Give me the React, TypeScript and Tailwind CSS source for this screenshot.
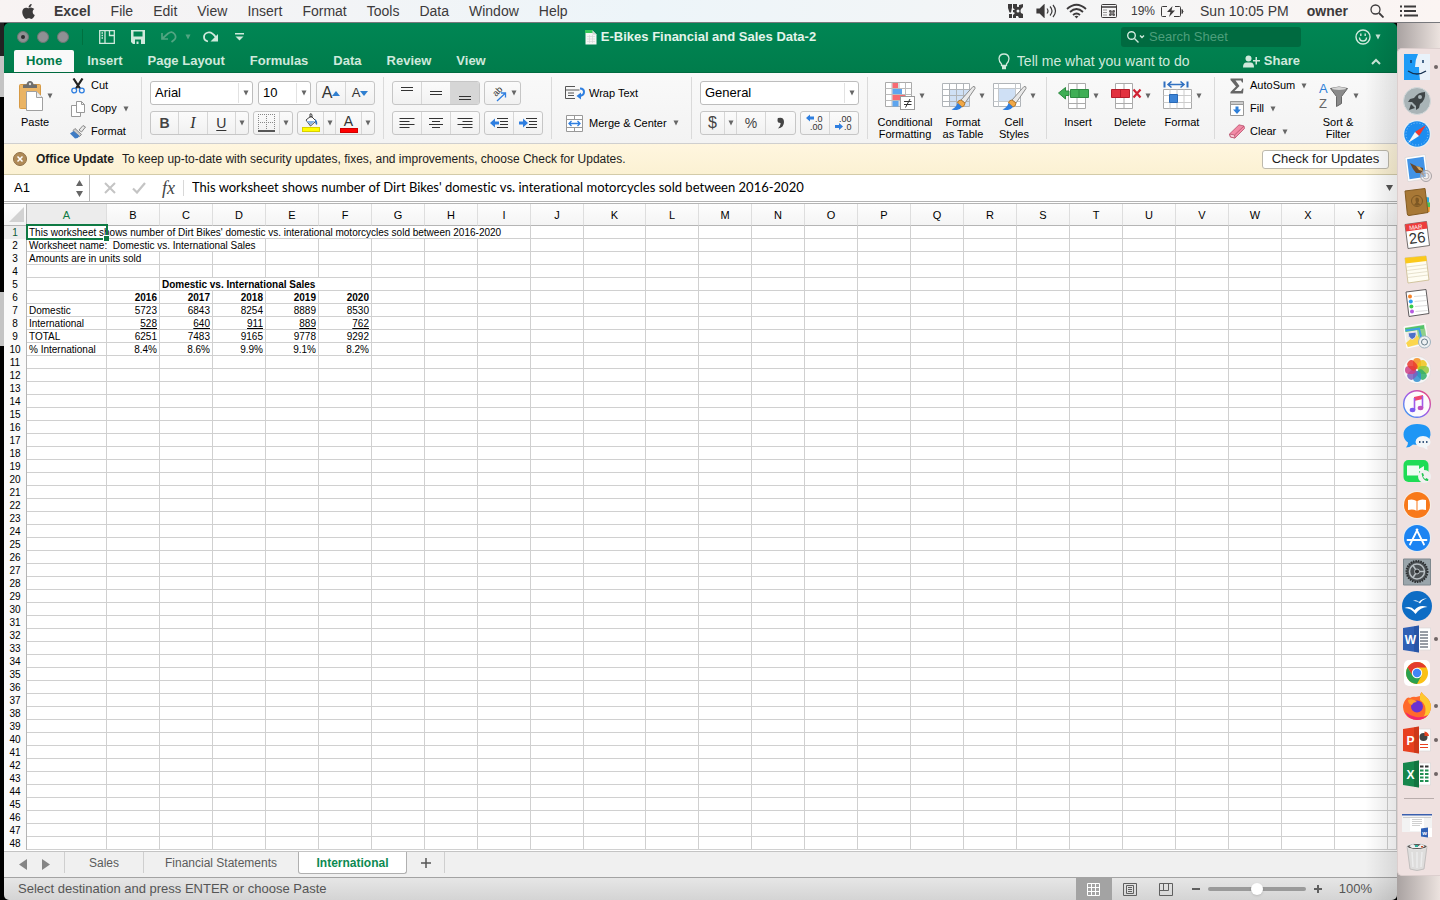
import type { ReactNode } from 'react';
import { FaApple } from 'react-icons/fa';

const MENUS = ['File', 'Edit', 'View', 'Insert', 'Format', 'Tools', 'Data', 'Window', 'Help'];
const TABS = ['Home', 'Insert', 'Page Layout', 'Formulas', 'Data', 'Review', 'View'];
const COLUMNS = 'ABCDEFGHIJKLMNOPQRSTUVWXY'.split('');
const ROW_COUNT = 48;
const TITLE = "This worksheet shows number of Dirt Bikes' domestic vs. interational motorcycles sold between 2016-2020";

type Cell = { text: string; span?: number; bold?: boolean; right?: boolean; underline?: boolean };

const nums = (label: string, values: string[], extra: Partial<Cell> = {}): Record<number, Cell> => {
    const row: Record<number, Cell> = {};
    if (label) row[0] = { text: label };
    values.forEach((v, i) => {
        row[i + 1] = { text: v, right: true, ...extra };
    });
    return row;
};

// row number -> column index -> cell
const DATA: Record<number, Record<number, Cell>> = {
    1: { 0: { text: TITLE, span: 9 } },
    2: { 0: { text: 'Worksheet name:\u00a0 Domestic vs. International Sales', span: 4 } },
    3: { 0: { text: 'Amounts are in units sold', span: 2 } },
    5: { 2: { text: 'Domestic vs. International Sales', span: 4, bold: true } },
    6: nums('', ['2016', '2017', '2018', '2019', '2020'], { bold: true }),
    7: nums('Domestic', ['5723', '6843', '8254', '8889', '8530']),
    8: nums('International', ['528', '640', '911', '889', '762'], { underline: true }),
    9: nums('TOTAL', ['6251', '7483', '9165', '9778', '9292']),
    10: nums('% International', ['8.4%', '8.6%', '9.9%', '9.1%', '8.2%']),
};

function Caret({ className = 'text-[#666]' }: { className?: string }) {
    return (
        <svg width="6" height="6" viewBox="0 0 6 6" className={`shrink-0 ${className}`} aria-hidden="true">
            <path d="M0.5 0.5h5L3 5.5z" fill="currentColor" />
        </svg>
    );
}

/* ---------- macOS menu bar ---------- */

function MenuBar() {
    return (
        <header className="flex h-[23px] items-center border-b border-[#77787c] bg-linear-to-r from-[#f8f3f3] via-[#edf5f9] via-45% to-[#fbf5f3] pl-5 pr-[22px] text-sm text-[#3c3a3b]">
            <FaApple size={17} className="mr-[17px]" />
            <nav className="flex gap-5">
                <a href="#excel" className="font-bold">Excel</a>
                {MENUS.map(m => <a key={m} href={`#menu-${m}`}>{m}</a>)}
            </nav>
            <div className="ml-auto flex items-center">
                <svg width="16" height="16" viewBox="0 0 16 16" className="mr-3" fill="#3c3a3b">
                    <path d="M0 1h4v3.500l-1 5H1.500L0 5zM1 11h3v4H1z" />
                    <path d="M5 1h4v2.500q1 1 2 0V2l4-1v3l-2 2q-1 2 0 4l2 1v4h-4l-1-2H8v2H5v-3l2-2-2-1V7h2L5 5z" />
                    <circle cx="10" cy="8" r="1.500" fill="#f3f5f7" />
                </svg>
                <svg width="22" height="14" viewBox="0 0 22 14" className="mr-2" fill="none" stroke="#3c3a3b" strokeWidth="1.200">
                    <path d="M1 5h3l4-4v12L4 9H1z" fill="#3c3a3b" />
                    <path d="M11 4.500q2 2.500 0 5M14 2.500q4 4.500 0 9M17 1q5 6 0 12" />
                </svg>
                <svg width="21" height="16" viewBox="0 0 21 16" className="mr-[14px]" fill="none" stroke="#3c3a3b" strokeWidth="1.800">
                    <path d="M1 6q9.500-8.500 19 0M4 9q6.500-6 13 0M7 12q3.500-3 7 0" />
                    <path d="M10.500 15.500l-2-2.200q2-1.300 4 0z" fill="#3c3a3b" stroke="none" />
                </svg>
                <svg width="16" height="14" viewBox="0 0 16 14" className="mr-[14px]" fill="none" stroke="#3c3a3b">
                    <rect x="0.5" y="0.5" width="15" height="13" rx="1" />
                    <path d="M1 3h14" strokeWidth="1.500" />
                    <path d="M2.500 6h4M2.500 8.500h4M2.500 11h4" strokeDasharray="1 1" />
                    <path d="M10 6.500v5M12 6.500v5M8.500 8h5M8.500 10h5M8.500 6.500h1.500v1.500H8.500zM12 6.500h1.500v1.500H12zM8.500 10h1.500v1.500H8.500zM12 10h1.500v1.500H12z" strokeWidth="0.7" />
                </svg>
                <span className="mr-1.5 text-xs">19%</span>
                <svg width="23" height="13" viewBox="0 0 23 13" className="mr-4" fill="none" stroke="#3c3a3b">
                    <path d="M6 1.500H1.500Q.5 1.500.5 2.500v8q0 1 1 1H5M14 1.500h4.500q1 0 1 1v8q0 1-1 1H13" />
                    <path d="M11.500 1L6 7h3.500l-1.500 5 6-6.500h-3.500z" fill="#3c3a3b" stroke="none" />
                    <path d="M21 4.500q2 2 0 4z" fill="#3c3a3b" />
                </svg>
                <span className="mr-[18px]">Sun 10:05 PM</span>
                <span className="mr-[22px] font-bold">owner</span>
                <svg width="14" height="14" viewBox="0 0 14 14" className="mr-4" fill="none" stroke="#3c3a3b" strokeWidth="1.300">
                    <circle cx="5.500" cy="5.500" r="4.500" />
                    <path d="M9 9l4.500 4.500" strokeWidth="1.800" />
                </svg>
                <svg width="18" height="12" viewBox="0 0 18 12" stroke="#3c3a3b" strokeWidth="2">
                    <path d="M0 1.500h2M0 6h2M0 10.500h2M4 1.500h12M4 6h12M4 10.500h14" />
                </svg>
            </div>
        </header>
    );
}

/* ---------- Title bar and tabs ---------- */

function TitleBar() {
    return (
        <div className="grid h-7 grid-cols-[1fr_auto_1fr] items-center text-[#cfe9dc]">
            <div className="flex items-center pl-[13px]">
                <div className="flex gap-2 pr-[13px]">
                    {['Close', 'Minimize', 'Zoom'].map((n, i) => (
                        <button key={n} aria-label={n} className="flex size-3 items-center justify-center rounded-full border border-[#6c7772] bg-[#909094]">
                            {i === 0 && <span className="size-1 rounded-full bg-[#2c2c2e]" />}
                        </button>
                    ))}
                </div>
                <span className="h-4 w-px bg-[#00703f]" />
                <button aria-label="Sidebar" className="ml-4">
                    <svg width="16" height="14" viewBox="0 0 16 14" fill="none" stroke="currentColor" strokeWidth="1.300">
                        <path d="M.7.700h14.600v12.600H.700zM6 .7v12.600" />
                        <path d="M10.500 1v4.500H15M2.500 3h1.500M2.500 5.500h1.500M2.500 8h1.500" />
                    </svg>
                </button>
                <button aria-label="Save" className="ml-4">
                    <svg width="14" height="14" viewBox="0 0 14 14" fill="currentColor" fillRule="evenodd">
                        <path d="M0 0h14v14H2l-2-2zM2.500 1.500v5h9v-5zM4 9.500V14h1.500v-2.500h2V14H10V9.500z" />
                    </svg>
                </button>
                <button aria-label="Undo" className="ml-4 text-[#52a582]">
                    <svg width="16" height="12" viewBox="0 0 16 12" fill="none" stroke="currentColor" strokeWidth="1.700">
                        <path d="M1 2v6h6M1.500 7.500L7 2.500q4-3 6.500.5t-.5 6L10.500 11" />
                    </svg>
                </button>
                <Caret className="ml-2 text-[#52a582]" />
                <button aria-label="Redo" className="ml-3">
                    <svg width="16" height="12" viewBox="0 0 16 12" fill="none" stroke="currentColor" strokeWidth="1.800">
                        <path d="M5 10.500Q1 9.500 1 6t4-4.500 8 5" />
                        <path d="M15 3v7.500H7.500z" fill="currentColor" stroke="none" />
                    </svg>
                </button>
                <button aria-label="Customize toolbar" className="ml-4">
                    <svg width="9" height="8" viewBox="0 0 9 8" fill="currentColor">
                        <path d="M0 0h9v1.500H0zM.5 3.500h8l-4 4z" />
                    </svg>
                </button>
            </div>
            <h1 className="flex items-center gap-1 text-[13px] font-bold text-[#e3f4eb]">
                <svg width="12" height="15" viewBox="0 0 12 15">
                    <path d="M.5.500h7l4 4v10H.500z" fill="#f4f6f4" />
                    <path d="M0 0h7.500l1 3H0z" fill="#35c85a" />
                    <path d="M7.500.500v4h4z" fill="#cfd5d1" />
                    <path d="M2 6.500h8M2 9h8M2 11.500h8M4.500 5v8M7.500 5v8" stroke="#d5dad7" strokeWidth="0.700" />
                </svg>
                E-Bikes Financial and Sales Data-2
            </h1>
            <div className="flex items-center justify-end pr-4">
                <label className="mr-[54px] flex h-5 w-[180px] items-center gap-1 rounded-[3px] bg-[#006a40] pl-1.5">
                    <svg width="18" height="12" viewBox="0 0 18 12" fill="none" stroke="currentColor" strokeWidth="1.400" className="shrink-0">
                        <circle cx="4.500" cy="4.500" r="3.800" />
                        <path d="M7.500 7.500l4 4M13 4.500l2 2 2-2" />
                    </svg>
                    <input aria-label="Search Sheet" placeholder="Search Sheet" className="w-full min-w-0 bg-transparent text-[13px] outline-none placeholder:text-[#4d9f7b]" />
                </label>
                <button aria-label="Feedback" className="flex items-center gap-1">
                    <svg width="16" height="16" viewBox="0 0 16 16" fill="none" stroke="currentColor" strokeWidth="1.400">
                        <circle cx="8" cy="8" r="7" />
                        <path d="M4.500 8.500q0 3.500 3.500 3.500t3.500-3.500M5.800 4.500v2.500M10.200 4.500v2.500" />
                    </svg>
                    <Caret className="text-[#cfe9dc]" />
                </button>
            </div>
        </div>
    );
}

function TabRow() {
    return (
        <div className="flex h-[22px] items-end border-b border-[#006b40] pl-2.5 text-[#cfe9dc]">
            <nav className="flex gap-px text-[13px] font-bold leading-[22px]">
                {TABS.map((t, i) => (
                    <button key={t} className={i === 0 ? 'h-[22px] rounded-t-[2px] bg-[#f9f9f9] px-3 text-[#007a4a]' : 'h-[22px] px-3'}>
                        {t}
                    </button>
                ))}
            </nav>
            <div className="ml-auto flex h-[22px] items-center pr-4">
                <svg width="12" height="17" viewBox="0 0 12 17" fill="none" stroke="currentColor" strokeWidth="1.300" className="mr-[7px]">
                    <path d="M3.500 12.500V11Q1 8.500 1 5.500 1.500 1 6 1t5 4.500Q11 8.500 8.500 11v1.500zM4 15.500h4M4 14h4" />
                </svg>
                <input aria-label="Tell me what you want to do" placeholder="Tell me what you want to do" className="mr-[46px] w-[180px] bg-transparent text-sm leading-4 outline-none placeholder:text-[#cfe9dc]" />
                <button className="mr-[71px] flex items-center gap-1 text-[13px] font-bold leading-4">
                    <svg width="17" height="13" viewBox="0 0 17 13" fill="currentColor">
                        <circle cx="5.500" cy="3.500" r="3" />
                        <path d="M0 12.500Q0 7.500 3.500 7.500h4q3.500 0 3.500 5zM12.500 2h1.500v3h3v1.500h-3v3h-1.500v-3H10V5h2.500z" />
                    </svg>
                    Share
                </button>
                <button aria-label="Collapse ribbon">
                    <svg width="10" height="7" viewBox="0 0 10 7" fill="none" stroke="currentColor" strokeWidth="2">
                        <path d="M1 6l4-4 4 4" />
                    </svg>
                </button>
            </div>
        </div>
    );
}

/* ---------- Ribbon ---------- */

function Group({ children, className = 'pl-2' }: { children: ReactNode; className?: string }) {
    return (
        <div className={`flex shrink-0 ${className}`}>
            {children}
            <span className="my-1 ml-auto w-px bg-[#dadada]" />
        </div>
    );
}

// Two rows of 24px controls
function Stack({ children }: { children: ReactNode }) {
    return <div className="mr-2 flex flex-col gap-1.5 pt-2">{children}</div>;
}

function BigButton({ label, icon, className }: { label: ReactNode; icon: ReactNode; className: string }) {
    return (
        <button className={`flex shrink-0 flex-col items-center self-start pt-2 ${className}`}>
            <span className="flex h-[30px] items-center gap-[3px]">
                {icon}
                <Caret />
            </span>
            <span className="mt-[5px] leading-3">{label}</span>
        </button>
    );
}

function RowButton({ label, icon, caret }: { label: string; icon: ReactNode; caret?: boolean }) {
    return (
        <button className="flex h-[23px] shrink-0 items-center">
            <span className="mr-[5px] flex w-4 justify-center">{icon}</span>
            {label}
            {caret && <Caret className="ml-1.5 text-[#666]" />}
        </button>
    );
}

function Box({ children, className }: { children: ReactNode; className: string }) {
    return (
        <div className={`flex h-6 shrink-0 divide-x divide-[#d6d6d6] overflow-hidden rounded-[3px] border border-[#c6c6c6] bg-linear-to-b from-[#fbfbfb] to-[#f1f1f1] ${className}`}>
            {children}
        </div>
    );
}

function Tool({ label, children, className = 'flex-1' }: { label: string; children: ReactNode; className?: string }) {
    return (
        <button aria-label={label} title={label} className={`flex items-center justify-center ${className}`}>
            {children}
        </button>
    );
}

function Dropdown({ label, value, className }: { label: string; value: string; className: string }) {
    return (
        <div className={`relative h-6 shrink-0 rounded-[3px] border border-[#bdbdbd] bg-white ${className}`}>
            <select aria-label={label} defaultValue={value} className="size-full appearance-none bg-transparent pl-1 pr-4 text-[13px] outline-none">
                <option>{value}</option>
            </select>
            <span className="pointer-events-none absolute inset-y-px right-0 flex w-[14px] items-center justify-center border-l border-[#e2e2e2]">
                <Caret />
            </span>
        </div>
    );
}

function Lines({ d }: { d: string }) {
    return (
        <svg width="16" height="16" viewBox="0 0 16 16" stroke="#333" aria-hidden="true">
            <path d={d} />
        </svg>
    );
}

const ARROW_L = 'M0 5l5-4.500v3h4v3H5v3z';
const ARROW_R = 'M9 5L4 .500v3H0v3h4v3z';

function Indent({ out }: { out?: boolean }) {
    return (
        <svg width="18" height="12" viewBox="0 0 18 12" aria-hidden="true">
            <path d="M7 1.500h11M10 4.500h8M10 7.500h8M7 10.500h11" stroke="#333" />
            <path d={out ? ARROW_L : ARROW_R} transform="translate(0 1)" fill="#2f7fe0" />
        </svg>
    );
}

function Brush() {
    return (
        <g>
            <path d="M19 18L31 4.500Q33.500 4 33 6.500L23 21z" fill="#e9e9e9" stroke="#8c8c8c" />
            <path d="M19 18q-3 0-3.500 3l4.500 4q3-1 3-4z" fill="#f0a848" stroke="#b77a2a" />
            <path d="M15.500 21q-1 4-6 6.500 7 2 10.500-2.500z" fill="#2f7fe0" />
        </g>
    );
}

function Ribbon() {
    return (
        <div className="flex h-[71px] overflow-hidden border-b border-[#cfcfcf] bg-linear-to-b from-[#f9f9f9] to-[#f3f3f3] text-[11px] text-black">
            <Group className="w-[138px]">
                <BigButton
                    label="Paste"
                    className="w-[62px]"
                    icon={
                        <svg width="26" height="30" viewBox="0 0 26 30">
                            <rect x="1.500" y="3.500" width="21" height="24" rx="1" fill="#eab465" stroke="#d79a45" />
                            <path d="M5 7V4.500q0-1 1-1h2.500Q9 0 12 0t3.500 3.500H18q1 0 1 1V7z" fill="#6d6d6d" />
                            <circle cx="12" cy="3" r="1.200" fill="#ddd" />
                            <path d="M8.500 10.500h10l6 6V29.500h-16z" fill="#fff" stroke="#a0a0a0" />
                            <path d="M18.500 10.500v6h6" fill="#eee" stroke="#a0a0a0" />
                        </svg>
                    }
                />
                <div className="flex flex-col pl-1 pt-px">
                    <RowButton
                        label="Cut"
                        icon={
                            <svg width="14" height="16" viewBox="0 0 14 16" fill="none">
                                <path d="M2.500.500l6.500 10M11.500.500L5 10.500" stroke="#222" strokeWidth="2.200" />
                                <circle cx="3.200" cy="12.500" r="2.400" stroke="#2f7fe0" strokeWidth="1.300" />
                                <circle cx="10.800" cy="12.500" r="2.400" stroke="#2f7fe0" strokeWidth="1.300" />
                            </svg>
                        }
                    />
                    <RowButton
                        label="Copy"
                        caret
                        icon={
                            <svg width="14" height="16" viewBox="0 0 14 16" fill="#fff" stroke="#999">
                                <path d="M.5 4.500h6l3 3v8h-9z" />
                                <path d="M5.500.500h5l3 3v8h-8zM10.500.500v3h3" />
                            </svg>
                        }
                    />
                    <RowButton
                        label="Format"
                        icon={
                            <svg width="16" height="14" viewBox="0 0 16 14">
                                <path d="M9 5l4-4.500 2.500 1.500-4 5z" fill="#e8e8e8" stroke="#888" />
                                <path d="M5 3.500l6.500 6-2 2L3 5.500z" fill="#ccc" stroke="#888" />
                                <path d="M3.500 6L0 8.500l5 5Q8 13.500 9.500 11z" fill="#3f7cc4" />
                            </svg>
                        }
                    />
                </div>
            </Group>

            <Group>
                <Stack>
                    <div className="flex gap-[5px]">
                        <Dropdown label="Font" value="Arial" className="w-[103px]" />
                        <Dropdown label="Font size" value="10" className="w-[53px]" />
                        <Box className="w-[59px]">
                            <Tool label="Increase font size">
                                <span className="text-base text-[#333]">A</span>
                                <svg width="8" height="5" viewBox="0 0 8 5"><path d="M0 5h8L4 0z" fill="#2f7fd0" /></svg>
                            </Tool>
                            <Tool label="Decrease font size">
                                <span className="text-[13px] text-[#333]">A</span>
                                <svg width="8" height="5" viewBox="0 0 8 5"><path d="M0 0h8L4 5z" fill="#2f7fd0" /></svg>
                            </Tool>
                        </Box>
                    </div>
                    <div className="flex gap-1">
                        <Box className="w-[99px]">
                            <Tool label="Bold"><span className="text-sm font-bold text-[#444]">B</span></Tool>
                            <Tool label="Italic"><span className="font-['Liberation_Serif'] text-base italic text-[#333]">I</span></Tool>
                            <Tool label="Underline"><span className="text-sm text-[#333] underline underline-offset-2">U</span></Tool>
                            <Tool label="Underline options" className="w-3"><Caret /></Tool>
                        </Box>
                        <Box className="w-10">
                            <Tool label="Borders">
                                <svg width="17" height="18" viewBox="0 0 17 18" fill="none" stroke="#888">
                                    <path d="M0 .500h17M0 8.500h17" strokeDasharray="1 1" />
                                    <path d="M.5 0v16M8.500 0v16M16.500 0v16" strokeDasharray="1 1" />
                                    <path d="M0 17h17" stroke="#222" strokeWidth="1.500" />
                                </svg>
                            </Tool>
                            <Tool label="Border options" className="w-3"><Caret /></Tool>
                        </Box>
                        <Box className="w-[78px]">
                            <Tool label="Fill color">
                                <svg width="18" height="20" viewBox="0 0 18 20">
                                    <path d="M4 7l5-4 5 5-5.500 5z" fill="#fff" stroke="#444" />
                                    <path d="M4.500 8h8.500l-4.500 4z" fill="#88b4e4" />
                                    <path d="M8 5V1q1.500-1 2 1v3" fill="none" stroke="#444" />
                                    <path d="M13 6q3 2 2 6-2-1-2-4z" fill="#2f6fc0" />
                                    <rect x="0.500" y="14.500" width="17" height="4" fill="#fffc00" stroke="#d8d000" />
                                </svg>
                            </Tool>
                            <Tool label="Fill color options" className="w-3"><Caret /></Tool>
                            <Tool label="Font color">
                                <span className="flex flex-col items-center">
                                    <span className="text-sm leading-[14px] text-[#333]">A</span>
                                    <span className="h-[5px] w-[18px] border border-[#d00000] bg-[#ff0000]" />
                                </span>
                            </Tool>
                            <Tool label="Font color options" className="w-3"><Caret /></Tool>
                        </Box>
                    </div>
                </Stack>
            </Group>

            <Group>
                <Stack>
                    <div className="flex gap-1">
                        <Box className="w-[88px]">
                            <Tool label="Align top"><Lines d="M2 2.500h12M2 5.500h12" /></Tool>
                            <Tool label="Align middle"><Lines d="M2 6.500h12M2 9.500h12" /></Tool>
                            <Tool label="Align bottom" className="flex-1 bg-[#d6d6d6]"><Lines d="M2 11.500h12M2 14.500h12" /></Tool>
                        </Box>
                        <Box className="w-[37px]">
                            <Tool label="Orientation" className="flex-1 gap-1">
                                <svg width="18" height="18" viewBox="0 0 18 18">
                                    <text fontSize="9" fill="#333" transform="translate(7 13) rotate(-45)">ab</text>
                                    <path d="M8 17l8-7.500M12 9h4.500v4.500" fill="none" stroke="#2f7fe0" strokeWidth="1.300" />
                                </svg>
                                <Caret />
                            </Tool>
                        </Box>
                    </div>
                    <div className="flex gap-1">
                        <Box className="w-[88px]">
                            <Tool label="Align left"><Lines d="M.5 3.500h15M.5 6.500h10M.5 9.500h15M.5 12.500h10" /></Tool>
                            <Tool label="Align center"><Lines d="M1 3.500h14M4 6.500h8M1 9.500h14M4 12.500h8" /></Tool>
                            <Tool label="Align right"><Lines d="M.5 3.500h15M5.500 6.500h10M.5 9.500h15M5.500 12.500h10" /></Tool>
                        </Box>
                        <Box className="w-[59px]">
                            <Tool label="Decrease indent"><Indent out /></Tool>
                            <Tool label="Increase indent"><Indent /></Tool>
                        </Box>
                    </div>
                </Stack>
            </Group>

            <Group className="w-[140px] pl-[13px]">
                <Stack>
                    <button className="flex h-6 items-center gap-1">
                        <svg width="20" height="14" viewBox="0 0 20 14" fill="none" stroke="#555">
                            <path d="M10 .500H.500v12H10M.5 4h14M3 7h6M3 9.500h6" />
                            <path d="M15 2.500q4 0 4 3.500t-5 4" stroke="#2f7fe0" strokeWidth="2" />
                            <path d="M11.500 10l4.500-3.500v7z" fill="#2f7fe0" stroke="none" />
                        </svg>
                        Wrap Text
                    </button>
                    <button className="flex h-6 items-center whitespace-nowrap">
                        <svg width="17" height="17" viewBox="0 0 17 17" fill="#fff" stroke="#999" className="ml-px mr-1.5">
                            <path d="M.5.500h16v16H.500zM.5 4.500h16M.5 12.500h16M8.500.500v4M8.500 12.500v4" />
                            <path d="M3 8.500h11M5.500 6L3 8.500 5.500 11M11.500 6L14 8.500 11.500 11" stroke="#2f7fe0" strokeWidth="1.300" fill="none" />
                        </svg>
                        Merge &amp; Center
                        <Caret className="ml-1.5 text-[#666]" />
                    </button>
                </Stack>
            </Group>

            <Group>
                <Stack>
                    <Dropdown label="Number format" value="General" className="w-[159px]" />
                    <div className="flex gap-1">
                        <Box className="w-24">
                            <Tool label="Currency"><span className="text-base text-[#444]">$</span></Tool>
                            <Tool label="Currency options" className="w-3"><Caret /></Tool>
                            <Tool label="Percent" className="w-[29px]"><span className="text-sm text-[#444]">%</span></Tool>
                            <Tool label="Comma" className="w-[29px]">
                                <svg width="8" height="12" viewBox="0 0 8 12"><path d="M1 1q6-1.500 6 4t-6 6.500q3-3 2.500-5.500Q.5 6 .500 3.500T1 1z" fill="#444" /></svg>
                            </Tool>
                        </Box>
                        <Box className="w-[59px]">
                            <Tool label="Increase decimal">
                                <svg width="18" height="18" viewBox="0 0 18 18">
                                    <path d="M0 4l4-3.500v2h4v3H4v2z" fill="#2f7fe0" />
                                    <text x="9" y="8" fontSize="9" fill="#333">.0</text>
                                    <text x="4" y="16" fontSize="9" fill="#333">.00</text>
                                </svg>
                            </Tool>
                            <Tool label="Decrease decimal">
                                <svg width="18" height="18" viewBox="0 0 18 18">
                                    <path d="M8 12.500l-4-3.500v2H0v3h4v2z" fill="#2f7fe0" />
                                    <text x="4" y="8" fontSize="9" fill="#333">.00</text>
                                    <text x="9" y="16" fontSize="9" fill="#333">.0</text>
                                </svg>
                            </Tool>
                        </Box>
                    </div>
                </Stack>
            </Group>

            <Group className="w-[179px] pl-1.5">
                <BigButton
                    label={<>Conditional<br />Formatting</>}
                    className="w-[62px]"
                    icon={
                        <svg width="31" height="28" viewBox="0 0 31 28">
                            <path d="M.5.500h26v24H.500z" fill="#fff" stroke="#aaa" />
                            <path d="M.5 6.500h26M.5 12.500h26M.5 18.500h26M7 .5v24M14 .5v24M20.500.500v24" stroke="#bbb" />
                            <path d="M7.500 1h5.500v5H7.500zM7.500 13H20v5H7.500z" fill="#f76a72" />
                            <path d="M7.500 7H17v5H7.500zM7.500 19h6v5.500h-6z" fill="#5ea5ee" />
                            <rect x="15.500" y="14.500" width="14" height="13" fill="#fff" stroke="#999" />
                            <path d="M19 19.500h7.500M19 22.500h7.500M25 17l-4.500 8.500" stroke="#333" />
                        </svg>
                    }
                />
                <BigButton
                    label={<>Format<br />as Table</>}
                    className="w-[54px]"
                    icon={
                        <svg width="34" height="28" viewBox="0 0 34 28">
                            <path d="M.5 1.500h27v23H.500z" fill="#fff" />
                            <path d="M8 8h19.500v16.500H8z" fill="#cfe0f5" />
                            <path d="M.5 1.500h27v23H.500zM.5 7.500h27M.5 13.500h27M.5 19.500h27M7.500 1.500v23M14.500 1.500v23M21.500 1.500v23" stroke="#b0b4b8" fill="none" />
                            <Brush />
                        </svg>
                    }
                />
                <BigButton
                    label={<>Cell<br />Styles</>}
                    className="w-12"
                    icon={
                        <svg width="34" height="28" viewBox="0 0 34 28">
                            <path d="M.5 1.500h27v23H.500z" fill="#fff" stroke="#b0b4b8" />
                            <path d="M.5 6.500h27M.5 19.500h27M5.500 1.500v23M22.500 1.500v23" stroke="#c4c8cc" />
                            <path d="M6 7h16v12H6z" fill="#cfe0f5" />
                            <Brush />
                        </svg>
                    }
                />
            </Group>

            <Group className="w-[168px] pl-[5px]">
                <BigButton
                    label="Insert"
                    className="w-[52px]"
                    icon={
                        <svg width="32" height="28" viewBox="0 0 32 28">
                            <path d="M10.500 1.500h17v25h-17zM19 1.500v25M10.500 21.500h17" fill="#fff" stroke="#aaa" />
                            <path d="M12.500 7.500h18v8h-18z" fill="#3fae55" stroke="#2c8a40" />
                            <path d="M.5 11l7-5.500V9H11v4.500H7.500V17z" fill="#3fae55" stroke="#2c8a40" />
                            <path d="M21 7.500v8" stroke="#2c8a40" />
                        </svg>
                    }
                />
                <BigButton
                    label="Delete"
                    className="w-[52px]"
                    icon={
                        <svg width="32" height="28" viewBox="0 0 32 28">
                            <path d="M5.500 1.500h17v25h-17zM14 1.500v25M5.500 21.500h17" fill="#fff" stroke="#aaa" />
                            <path d="M1.500 7.500h18v8h-18z" fill="#e2313f" stroke="#b51d2b" />
                            <path d="M10.500 7.500v8" stroke="#b51d2b" />
                            <path d="M23.500 7.500l7 8M30.500 7.500l-7 8" stroke="#cf2233" strokeWidth="2.200" />
                        </svg>
                    }
                />
                <BigButton
                    label="Format"
                    className="w-[52px]"
                    icon={
                        <svg width="30" height="30" viewBox="0 0 30 30">
                            <path d="M1.500.500v6M24.500.500v6" stroke="#2f6fc0" strokeWidth="2" />
                            <path d="M5 3.500h16M8.500.500L5 3.500l3.500 3M17.500.500L21 3.500l-3.500 3" stroke="#2f6fc0" strokeWidth="1.500" fill="none" />
                            <path d="M.5 8.500h28v19H.500z" fill="#fff" stroke="#aaa" />
                            <path d="M.5 14.500h28M.5 21.500h28M7 8.500v19M14 8.500v19M21 8.500v19" stroke="#ccc" />
                            <path d="M6.500 13.500h8v8h-8z" fill="#3d84d6" stroke="#2a69b5" />
                        </svg>
                    }
                />
            </Group>

            <div className="flex shrink-0 pl-[14px]">
                <div className="flex w-[82px] flex-col pt-px">
                    <RowButton
                        label="AutoSum"
                        caret
                        icon={<svg width="14" height="16" viewBox="0 0 14 16"><path d="M.5.500h12.500v4h-1L11 2.500H5.500L9.500 8l-5 5H11l1.500-2.500h1l-.5 5H.500v-1.500L6 8.500.500 2z" fill="#666" /></svg>}
                    />
                    <RowButton
                        label="Fill"
                        caret
                        icon={
                            <svg width="14" height="15" viewBox="0 0 14 15">
                                <path d="M.5.500h13v14H.500z" fill="#fff" stroke="#999" />
                                <path d="M.5.500h13v3H.500z" fill="#ccc" stroke="#999" />
                                <path d="M5.500 5.500h3v3H11l-4 4.500-4-4.500h2.500z" fill="#2f7fd8" />
                            </svg>
                        }
                    />
                    <RowButton
                        label="Clear"
                        caret
                        icon={
                            <svg width="16" height="15" viewBox="0 0 16 15" stroke="#b8506c" strokeWidth="0.800" strokeLinejoin="round">
                                <path d="M.5 10L10 .800l5 1.200.500 2.500L6 14l-4.500-1z" fill="#f28ba6" />
                                <path d="M.5 10l5 1L6 14l-4.500-1z" fill="#fbd0db" />
                                <path d="M5.500 11L15 2" />
                            </svg>
                        }
                    />
                </div>
                <BigButton
                    label={<>Sort &amp;<br />Filter</>}
                    className="w-[54px]"
                    icon={
                        <svg width="32" height="28" viewBox="0 0 32 28">
                            <text x="1" y="11" fontSize="13" fill="#2f7fd8">A</text>
                            <text x="1" y="26" fontSize="13" fill="#666">Z</text>
                            <path d="M12.500 6.500q8.500-3 17 0l-6 8v7l-5 3v-10z" fill="#8a8a8a" stroke="#666" />
                            <ellipse cx="21" cy="6.500" rx="7" ry="1.500" fill="#d5d5d5" />
                        </svg>
                    }
                />
            </div>
        </div>
    );
}

/* ---------- Message and formula bars ---------- */

function UpdateBar() {
    return (
        <div className="flex h-[31px] items-center border-b border-[#d3cba9] bg-linear-to-b from-[#fff6df] to-[#fbf1d3] pl-[9px] pr-2 text-[#1c1c1c]">
            <button aria-label="Dismiss" className="mr-[9px]">
                <svg width="14" height="14" viewBox="0 0 14 14">
                    <circle cx="7" cy="7" r="6.500" fill="#b08b57" stroke="#8f7048" />
                    <path d="M4.500 4.500l5 5M9.500 4.500l-5 5" stroke="#fff" strokeWidth="1.500" />
                </svg>
            </button>
            <p className="text-xs">
                <b className="mr-2">Office Update</b>
                To keep up-to-date with security updates, fixes, and improvements, choose Check for Updates.
            </p>
            <button className="ml-auto h-[19px] w-[127px] rounded-[3px] border border-[#bdb9ac] bg-white text-[13px] leading-4">Check for Updates</button>
        </div>
    );
}

function FormulaBar() {
    return (
        <div className="flex h-[29px] items-center border-b-[3px] border-double border-[#b4b4b4] bg-white">
            <div className="flex h-full w-[86px] items-center border-r border-[#b8b8b8] pl-2.5 pr-1.5">
                <input aria-label="Name Box" defaultValue="A1" className="w-full min-w-0 text-[13px] outline-none" />
                <svg width="7" height="17" viewBox="0 0 7 17" fill="#666" className="shrink-0">
                    <path d="M0 6h7L3.500 0zM0 11h7L3.500 17z" />
                </svg>
            </div>
            <button aria-label="Cancel" className="ml-[14px]">
                <svg width="12" height="12" viewBox="0 0 12 12" stroke="#c4c4c4" strokeWidth="2"><path d="M1 1l10 10M11 1L1 11" /></svg>
            </button>
            <button aria-label="Enter" className="ml-4">
                <svg width="14" height="12" viewBox="0 0 14 12" fill="none" stroke="#c4c4c4" strokeWidth="2.200"><path d="M1 6.500l4 4L13 1" /></svg>
            </button>
            <button aria-label="Insert function" className="ml-4 border-r border-[#d8d8d8] pr-2 font-['Liberation_Serif'] text-lg italic leading-4 text-[#444]">fx</button>
            <input aria-label="Formula" defaultValue={TITLE} className="ml-2 min-w-0 flex-1 font-['Lato',sans-serif] text-[13px] outline-none [font-variant-ligatures:none]" />
            <button aria-label="Expand formula bar" className="mr-1">
                <svg width="7" height="6" viewBox="0 0 7 6" fill="#555"><path d="M0 0h7L3.500 6z" /></svg>
            </button>
        </div>
    );
}

/* ---------- Sheet ---------- */

function SheetRow({ n }: { n: number }) {
    const row = DATA[n] ?? {};
    const cells: ReactNode[] = [];
    for (let c = 0; c <= COLUMNS.length; c++) {
        const cell = row[c];
        cells.push(
            <td
                key={c}
                colSpan={cell?.span}
                className={`relative h-[13px] whitespace-nowrap border-b border-r border-[#d0d0d0] px-0.5 pb-0 pt-0.5 ${cell?.bold ? 'font-bold' : ''} ${cell?.right ? 'text-right' : ''} ${cell?.underline ? 'underline' : ''}`}
            >
                {cell?.text}
                {n === 1 && c === 0 && (
                    <span className="pointer-events-none absolute -left-px -top-0.5 h-4 w-[82px] border-2 border-[#0f7a44]">
                        <span className="absolute -bottom-[3px] -right-[3px] size-[6px] border-l border-t border-white bg-[#0f7a44]" />
                    </span>
                )}
            </td>,
        );
        if (cell?.span) c += cell.span - 1;
    }
    return (
        <tr>
            <th scope="row" className={`border-r border-[#b5b5b5] p-0 pb-px pt-0.5 font-normal ${n === 1 ? 'bg-[#ececec] text-[#0f5a38]' : 'bg-[#fafafa]'}`}>{n}</th>
            {cells}
        </tr>
    );
}

function Sheet() {
    return (
        <div className="flex-1 overflow-hidden bg-white pb-px">
            <table className="w-full table-fixed border-separate border-spacing-0 text-[10px] leading-[10px] text-black">
                <colgroup>
                    <col className="w-[23px]" />
                    {COLUMNS.map(c => (
                        <col key={c} className={c === 'A' ? 'w-[80px]' : c === 'K' ? 'w-[62px]' : 'w-[53px]'} />
                    ))}
                    <col />
                </colgroup>
                <thead>
                    <tr className="bg-linear-to-b from-[#fdfdfd] to-[#f4f4f4]">
                        <td className="border-b border-r border-[#b5b5b5] p-0">
                            <svg width="15" height="15" viewBox="0 0 15 15" className="ml-[5px]" aria-hidden="true"><path d="M15 0v15H0z" fill="#d2d2d2" /></svg>
                        </td>
                        {COLUMNS.map(c => (
                            <th key={c} scope="col" className={`h-[22px] border-b border-r border-b-[#b5b5b5] border-r-[#dedede] p-0 text-[11px] font-normal ${c === 'A' ? 'bg-[#ececec] text-[#0f7a44]' : ''}`}>{c}</th>
                        ))}
                        <td className="border-b border-[#b5b5b5] p-0" />
                    </tr>
                </thead>
                <tbody>
                    {Array.from({ length: ROW_COUNT }, (_, i) => <SheetRow key={i} n={i + 1} />)}
                </tbody>
            </table>
        </div>
    );
}

function SheetTabs() {
    return (
        <div className="flex h-[26px] border-t border-[#c4c4c4] bg-[#f0f0f0] text-xs leading-5 text-[#5b5b5b]">
            <div className="flex w-[60px] items-center gap-[15px] pl-[15px]">
                <button aria-label="Previous sheet"><svg width="8" height="11" viewBox="0 0 8 11"><path d="M8 0v11L0 5.500z" fill="#858585" /></svg></button>
                <button aria-label="Next sheet"><svg width="8" height="11" viewBox="0 0 8 11"><path d="M0 0v11l8-5.500z" fill="#858585" /></svg></button>
            </div>
            <button className="h-[21px] w-20 border-x border-[#cfcfcf]">Sales</button>
            <button className="h-[21px] w-[154px]">Financial Statements</button>
            <button className="h-[22px] w-[109px] rounded-b-[3px] border-x border-b border-[#b0b0b0] bg-white font-bold text-[#0c8a52]">International</button>
            <button aria-label="Add sheet" className="flex h-[21px] w-[38px] items-center justify-center border-r border-[#cfcfcf]">
                <svg width="10" height="10" viewBox="0 0 10 10" stroke="#555" strokeWidth="1.500"><path d="M5 0v10M0 5h10" /></svg>
            </button>
        </div>
    );
}

function StatusBar() {
    return (
        <footer className="flex h-[23px] items-center border-t border-[#a3a3a3] bg-linear-to-b from-[#e6e6e6] to-[#d4d4d4] pl-[14px] pr-[25px] text-[13px] leading-4 text-[#555]">
            <span>Select destination and press ENTER or choose Paste</span>
            <div className="ml-auto flex h-full items-center">
                <button aria-label="Normal view" className="flex h-full w-9 items-center justify-center bg-[#a3a3a3]">
                    <svg width="13" height="13" viewBox="0 0 13 13" fill="none" stroke="#fff"><path d="M.5.500h12v12H.500zM4.500.500v12M8.500.500v12M.5 4.500h12M.5 8.500h12" /></svg>
                </button>
                <button aria-label="Page layout view" className="flex h-full w-9 items-center justify-center">
                    <svg width="14" height="13" viewBox="0 0 14 13" fill="none" stroke="#5f5f5f"><path d="M.5.500h13v12H.500zM3.500 2.500h7v8h-7zM5 4.500h4M5 6.500h4M5 8.500h4" /></svg>
                </button>
                <button aria-label="Page break view" className="flex h-full w-9 items-center justify-center">
                    <svg width="14" height="13" viewBox="0 0 14 13" fill="none" stroke="#5f5f5f"><path d="M.5.500h13v12H.500zM4.500.500v7M9.500.500v7M.5 7.500h9" /></svg>
                </button>
                <button aria-label="Zoom out" className="ml-2 h-0.5 w-2 bg-[#5f5f5f]" />
                <input
                    type="range"
                    aria-label="Zoom"
                    defaultValue={50}
                    className="mx-2 h-1 w-[98px] appearance-none rounded-full bg-[#9a9a9a] [&::-webkit-slider-thumb]:size-3 [&::-webkit-slider-thumb]:appearance-none [&::-webkit-slider-thumb]:rounded-full [&::-webkit-slider-thumb]:bg-white [&::-webkit-slider-thumb]:shadow"
                />
                <button aria-label="Zoom in">
                    <svg width="8" height="8" viewBox="0 0 8 8" stroke="#5f5f5f" strokeWidth="2"><path d="M4 0v8M0 4h8" /></svg>
                </button>
                <span className="ml-[17px]">100%</span>
            </div>
        </footer>
    );
}

/* ---------- Dock ---------- */

function OfficeIcon({ letter, color, dark, children }: { letter: string; color: string; dark: string; children: ReactNode }) {
    return (
        <>
            <path d="M14 3h13.500v22H14z" fill="#fff" stroke="#d5d5d5" strokeWidth="0.600" />
            {children}
            <path d="M0 3L16 .500v27L0 25z" fill={color} />
            <path d="M16 .500v27l-5-.8V1.300z" fill={dark} opacity="0.400" />
            <text x="7.500" y="18.500" fontSize="12" fontWeight="bold" textAnchor="middle" fill="#fff">{letter}</text>
        </>
    );
}

const PETALS = ['#f78f1e', '#f0c419', '#93c83d', '#2fae6a', '#2f8fd0', '#7a5fc0', '#cc3f86', '#ea3a2e'];

const DOCK: { name: string; running?: boolean; art: ReactNode }[] = [
    {
        name: 'Finder',
        running: true,
        art: (
            <>
                <path d="M1 1h26v26H1z" fill="#e9f2fa" />
                <path d="M1 1h14q-3 6-3 13h4q0 8 1 13H1z" fill="#1e9bf6" />
                <path d="M8 7v3M20 7v3" stroke="#123a66" strokeWidth="1.500" />
                <path d="M5 18q9 6 18 0" fill="none" stroke="#14304f" strokeWidth="1.300" />
            </>
        ),
    },
    {
        name: 'Launchpad',
        art: (
            <>
                <circle cx="14" cy="14" r="13.500" fill="#a9b4b7" stroke="#d4dadb" />
                <path d="M22 5q-7 0-11 6l-4 1-2 3 4 0 4 4 0 4 3-2 1-4q6-4 5-12z" fill="#3f4547" />
                <circle cx="17" cy="10" r="2" fill="#a9b4b7" />
                <path d="M8 17l-2 6 6-2z" fill="#3f4547" />
            </>
        ),
    },
    {
        name: 'Safari',
        art: (
            <>
                <circle cx="14" cy="14" r="14" fill="#e8edf1" />
                <circle cx="14" cy="14" r="12.800" fill="#1c8df0" />
                <circle cx="14" cy="14" r="11" fill="none" stroke="#8cc8fa" strokeDasharray="1 2" />
                <path d="M23 5L12 12l4 4z" fill="#f2392f" />
                <path d="M5 23l7-11 4 4z" fill="#f4f4f4" />
            </>
        ),
    },
    {
        name: 'Mail',
        art: (
            <>
                <path d="M2 3.500L22 .500l3 24-20 3z" fill="#fff" stroke="#ccc" strokeWidth="0.500" />
                <path d="M4 5.200l16.500-2.500 2.500 20-16.500 2.500z" fill="#4293e6" />
                <path d="M7 9l6 3 7 2 0 4 2 5-5-4-4 0-3-4-2-4z" fill="#6b4a2a" />
                <path d="M13 12l4 1 3 4-4-1z" fill="#d9a860" />
                <circle cx="23" cy="22" r="5.500" fill="#e9e5e6" fillOpacity="0.500" stroke="#a9a3a5" />
                <circle cx="23" cy="22" r="3" fill="none" stroke="#a9a3a5" strokeWidth="0.700" />
            </>
        ),
    },
    {
        name: 'Contacts',
        art: (
            <>
                <path d="M22 4l4 1v5h-3z" fill="#e8e8e8" />
                <path d="M23 9l3 .5v5h-3z" fill="#27a8e0" />
                <path d="M23 14l4 .5v5h-3z" fill="#4cc35a" />
                <path d="M23 19l4 0-.5 5h-3z" fill="#f09a2a" />
                <path d="M2 3L22 .500l3 24L6 27.500q-1.500 0-1.700-1.500z" fill="#a87836" stroke="#845b22" />
                <circle cx="14" cy="13" r="5.500" fill="none" stroke="#7d5824" />
                <path d="M14 9.500q2 0 2 2.500t-1 2.500l2.500 2q-3 2-6.500.500l2-2.500q-1.500-5 1-5z" fill="#7d5824" />
            </>
        ),
    },
    {
        name: 'Calendar',
        art: (
            <>
                <path d="M2 3.500L23.500.500l3 24L5 27.500z" fill="#fff" stroke="#55504f" strokeWidth="0.800" />
                <path d="M2 3.500L23.500.500l1 7L3 10.500z" fill="#ed3b3b" />
                <text x="13" y="8.200" fontSize="6" textAnchor="middle" fill="#fff" transform="rotate(-7 13 8)">MAR</text>
                <text x="14.500" y="22" fontSize="15" textAnchor="middle" fill="#333" transform="rotate(-7 14 20)">26</text>
            </>
        ),
    },
    {
        name: 'Notes',
        art: (
            <>
                <path d="M2 3L23 1l3 24-21 3z" fill="#fffdf2" stroke="#c8b98c" strokeWidth="0.800" />
                <path d="M2 3L23 1l.8 5L2.500 8.500z" fill="#fbc91c" />
                <path d="M3.500 12l20-2.500M4 15.500L24 13M4.500 19l20-2.500M5 22.500L25 20" stroke="#ddd6bd" strokeWidth="0.700" />
            </>
        ),
    },
    {
        name: 'Reminders',
        art: (
            <>
                <path d="M3 3L23 .500l3 24-20 3z" fill="#fff" stroke="#605c5e" />
                <path d="M11 7.500l12-1M11.500 12.500l12-1M12 17.500l12-1M12.500 22.500l12-1" stroke="#ccc" strokeWidth="0.700" />
                <circle cx="7" cy="7.500" r="2" fill="#f5822a" />
                <circle cx="7.800" cy="12.500" r="2" fill="#2a9bf0" />
                <circle cx="8.400" cy="17.500" r="2" fill="#3acb4a" />
                <circle cx="9" cy="22.500" r="2" fill="#b65ae0" />
            </>
        ),
    },
    {
        name: 'Maps',
        art: (
            <>
                <path d="M1 5l21-3.500 3 20L4 26z" fill="#f1eee4" stroke="#fff" />
                <path d="M2 6l19-3 .5 4L2.500 10z" fill="#55c46a" />
                <path d="M14 8l8-1.500 2 14-8 1z" fill="#8fd08a" />
                <path d="M3 21l10-9 7 9-15 4z" fill="#fbd64e" />
                <path d="M2.500 8.500L16 6.500l3 12" fill="none" stroke="#3f9fe8" strokeWidth="2" />
                <path d="M5 11l8-1q1 6-4 7.500Q5 16 5 11z" fill="#4b6fc8" stroke="#e8e4f0" />
                <circle cx="21.500" cy="20" r="6" fill="#eef1f3" stroke="#9fb2be" />
                <circle cx="21.500" cy="20" r="3" fill="none" stroke="#667b88" />
            </>
        ),
    },
    {
        name: 'Photos',
        art: (
            <>
                <circle cx="14" cy="14" r="13.800" fill="#f7f6f6" stroke="#d8d2d2" strokeWidth="0.500" />
                {PETALS.map((p, i) => (
                    <rect key={p} x="10" y="2" width="8" height="11" rx="4" fill={p} fillOpacity="0.850" transform={`rotate(${i * 45} 14 14)`} />
                ))}
            </>
        ),
    },
    {
        name: 'iTunes',
        art: (
            <>
                <defs>
                    <linearGradient id="tunes" x1="0" y1="1" x2="1" y2="0">
                        <stop offset="0" stopColor="#2aa5f5" />
                        <stop offset="0.500" stopColor="#a25ae8" />
                        <stop offset="1" stopColor="#f5476a" />
                    </linearGradient>
                </defs>
                <circle cx="14" cy="14" r="13.300" fill="#fdfbfc" stroke="url(#tunes)" strokeWidth="1.400" />
                <path d="M11 7l9-2v4l-9 2z" fill="#f0476e" />
                <path d="M11.500 8v12M19.500 6v12" stroke="#a25ae8" strokeWidth="1.600" />
                <ellipse cx="9.500" cy="20" rx="2.800" ry="2.200" fill="#7c5cf0" />
                <ellipse cx="17.500" cy="18" rx="2.800" ry="2.200" fill="#c04fc0" />
            </>
        ),
    },
    {
        name: 'Messages',
        art: (
            <>
                <path d="M14 1C6 1 .500 5.500.500 11.500q0 5 4.500 8 0 3-2 5 4 0 7-3 16 2 17.500-9.500Q28 1 14 1z" fill="#1e96f5" />
                <path d="M20 13q-7 .500-7.500 6 .5 5 8 5.500 2 2 4.500 2-1-1-1-3 3.500-1.500 3.500-4.500-.5-5.500-7.500-6z" fill="#f3f6f8" />
                <path d="M16 19h1.500M19.500 19H21M23 19h1.500" stroke="#3a5a80" strokeWidth="2" />
            </>
        ),
    },
    {
        name: 'FaceTime',
        art: (
            <>
                <rect x="0.500" y="3" width="25" height="22" rx="5" fill="#1fdc55" />
                <path d="M4 8.500h12v10H4zM16 12l5-3v8l-5-3z" fill="#effcf2" />
                <circle cx="21.500" cy="19.500" r="6.500" fill="#f1f1f1" />
                <path d="M18.500 16.500l1.500-.5 1 2.500-1 1q1 2 2.500 2.500l1-1 2 1.500-.5 1.500q-5 .500-6.500-7.500z" fill="#23c552" />
            </>
        ),
    },
    {
        name: 'iBooks',
        art: (
            <>
                <circle cx="14" cy="14" r="14" fill="#f6ede6" />
                <circle cx="14" cy="14" r="13" fill="#f8791a" />
                <path d="M13.500 10Q10 7.500 5 9v10q5-1.500 8.500.800zM14.500 10Q18 7.500 23 9v10q-5-1.500-8.500.800z" fill="#fff" />
            </>
        ),
    },
    {
        name: 'App Store',
        art: (
            <>
                <circle cx="14" cy="14" r="14" fill="#e4ebf2" />
                <circle cx="14" cy="14" r="13" fill="#1d84f2" />
                <path d="M14.500 5.500L7 20.500M13.500 5.500L21 20.500M4.500 16h19" stroke="#fff" strokeWidth="1.800" strokeLinecap="round" />
            </>
        ),
    },
    {
        name: 'System Preferences',
        art: (
            <>
                <path d="M.5 1h27v26H.500z" fill="#9aa5ab" stroke="#7e888e" />
                <circle cx="14" cy="13.500" r="10.500" fill="#4b5053" stroke="#2c2f31" strokeWidth="2" strokeDasharray="1.500 1" />
                <circle cx="14" cy="13.500" r="7.500" fill="none" stroke="#b9c0c4" strokeWidth="1.500" />
                <path d="M14 13.500h7M14 13.500l-4-6M14 13.500l-4 6" stroke="#b9c0c4" strokeWidth="1.500" />
                <circle cx="14" cy="13.500" r="2.500" fill="#2c2f31" stroke="#b9c0c4" />
            </>
        ),
    },
    {
        name: 'OpenOffice',
        art: (
            <>
                <circle cx="14" cy="14" r="15" fill="#0d6cc4" />
                <path d="M10 9q3-2 6 1 3-4 8-3.500-5 1-7 5-2-3-7-2.500zM1.500 16q6-3 10 2 5-6 13-3-7 0-12 7-4-6-11-6z" fill="#fff" />
            </>
        ),
    },
    {
        name: 'Word',
        running: true,
        art: (
            <OfficeIcon letter="W" color="#2f60b5" dark="#1d4690">
                <path d="M17 7h8M17 10h8M17 13h8M17 16h8M17 19h8M17 22h8" stroke="#333c4c" />
            </OfficeIcon>
        ),
    },
    {
        name: 'Chrome',
        art: (
            <>
                <rect x="1" y="1" width="26" height="26" rx="5" fill="#fff" />
                <circle cx="14" cy="14" r="11" fill="#fbc116" />
                <path d="M4.500 8.500A11 11 0 0 1 23.500 8.500H14L9.500 16.500z" fill="#e33b2e" />
                <path d="M4.500 8.500A11 11 0 0 0 14 25l4.500-8.400h-9z" fill="#2aa04f" />
                <circle cx="14" cy="14" r="5.200" fill="#fff" />
                <circle cx="14" cy="14" r="4.200" fill="#4285f4" />
            </>
        ),
    },
    {
        name: 'Firefox',
        running: true,
        art: (
            <>
                <path d="M4 6q2-1 3 0 3-2 6-1l4-1q0-2 1.500-4 1 2 4 4.500Q28 9 28 15q-1 12-14 13Q1 27 0 15q0-5 4-9z" fill="#ff6a2b" />
                <path d="M18.500 0q1 2 4 4.500Q28 9 28 15q-1 10-9 12 5-6 3-13-2-4-5-6-1-4 1.500-8z" fill="#ffc82e" />
                <path d="M2 20q4 8 12 8 7 0 11-5-6 3-12 2T2 20z" fill="#f0286c" />
                <circle cx="14" cy="14.500" r="6" fill="#6a32d0" />
                <path d="M5 8q5-2 9 2-4 0-5 3-4-1-4-5z" fill="#ffa02b" />
            </>
        ),
    },
    {
        name: 'PowerPoint',
        running: true,
        art: (
            <OfficeIcon letter="P" color="#e8401f" dark="#a82c12">
                <circle cx="20.500" cy="11" r="4" fill="#444" />
                <path d="M21.500 10V5.500q4 .500 4.500 4.500z" fill="#e8401f" />
                <path d="M17 18.500h8M17 21.500h8" stroke="#e8401f" />
            </OfficeIcon>
        ),
    },
    {
        name: 'Excel',
        running: true,
        art: (
            <OfficeIcon letter="X" color="#16864b" dark="#0c5a30">
                <path d="M17 6.500h3.500M22 6.500h3.500" stroke="#333" strokeWidth="2" />
                <path d="M17 10.500h3.500M22 10.500h3.500M17 14h3.500M22 14h3.500M17 17.500h3.500M22 17.500h3.500M17 21h3.500M22 21h3.500" stroke="#1f8f52" strokeWidth="2" />
            </OfficeIcon>
        ),
    },
];

function DockItem({ name, running, children }: { name: string; running?: boolean; children: ReactNode }) {
    return (
        <button aria-label={name} title={name} className="flex h-7 items-center gap-[3px] pl-[5px]">
            <svg width="28" height="28" viewBox="0 0 28 28" className="shrink-0 overflow-visible">{children}</svg>
            {running && <span className="size-1 shrink-0 rounded-full bg-[#6f6565]" />}
        </button>
    );
}

function Dock() {
    return (
        <aside className="flex w-[43px] shrink-0 flex-col bg-linear-to-r from-[#a9a2a1] to-[#ece3df] pb-6 pt-[25px]">
            <div className="flex flex-1 flex-col rounded-l-[5px] border-y border-l border-[#dccfce] bg-[#efe1e0] py-1">
                <div className="flex flex-1 flex-col justify-between">
                    {DOCK.map(d => <DockItem key={d.name} name={d.name} running={d.running}>{d.art}</DockItem>)}
                </div>
                <hr className="mx-1.5 mb-3 mt-2.5 border-[#b9adac]" />
                <DockItem name="Minimized document">
                    <path d="M-1 3h30v18H-1z" fill="#f3f3f3" />
                    <path d="M-1 3h30v1.500H-1z" fill="#3a5fae" />
                    <path d="M7 6h14v14H7z" fill="#fff" />
                    <path d="M9 8.500h10M9 10.500h10M9 12.500h10M9 14.500h8M0 6.500h28" stroke="#bbb" strokeWidth="0.700" />
                    <path d="M24 17h5v9h-5z" fill="#fff" />
                    <path d="M18 17.500l7-1v10l-7-1z" fill="#2f60b5" />
                    <text x="21.500" y="24" fontSize="6" fontWeight="bold" textAnchor="middle" fill="#fff">w</text>
                </DockItem>
                <div className="mt-1">
                    <DockItem name="Trash">
                        <path d="M4 3h20l-3 23q-7 3-14 0z" fill="#dedddc" stroke="#c2bfbe" />
                        <path d="M9 9l1 15M14 9v16M19 9l-1 15" stroke="#ececec" strokeWidth="1.500" />
                        <ellipse cx="14" cy="3.500" rx="10" ry="3" fill="#55504f" stroke="#ececec" />
                        <path d="M6 3l4-2 4 3 4-3 4 2-3 2H9z" fill="#efefef" />
                        <path d="M12 2h3v2h-3z" fill="#2fae9a" />
                        <path d="M18 3h2v1.500h-2z" fill="#c8502a" />
                    </DockItem>
                </div>
            </div>
        </aside>
    );
}

export default function App() {
    return (
        <div className="flex min-h-screen flex-col overflow-hidden font-['Liberation_Sans',sans-serif]">
            <MenuBar />
            <div className="flex flex-1 bg-black">
                {/* slice of the desktop behind the window */}
                <div className="flex w-1 shrink-0 flex-col bg-black">
                    <div className="h-[33px] bg-[#222]" />
                    <div className="h-[41px] bg-[#c4c4c4]" />
                    <div className="h-[195px]" />
                    <div className="h-[54px] bg-[#c4c4c4]" />
                </div>
                <main className="relative flex min-w-0 flex-1 flex-col overflow-hidden rounded-[5px]">
                    <div className="bg-linear-to-b from-[#008654] to-[#007c4b]">
                        <TitleBar />
                        <TabRow />
                    </div>
                    <Ribbon />
                    <UpdateBar />
                    <FormulaBar />
                    <Sheet />
                    <SheetTabs />
                    <StatusBar />
                    {/* dock shadow falling on the window edge */}
                    <div className="pointer-events-none absolute inset-y-0 right-0 w-8 bg-linear-to-r from-transparent to-black/10" />
                </main>
                <Dock />
            </div>
        </div>
    );
}
